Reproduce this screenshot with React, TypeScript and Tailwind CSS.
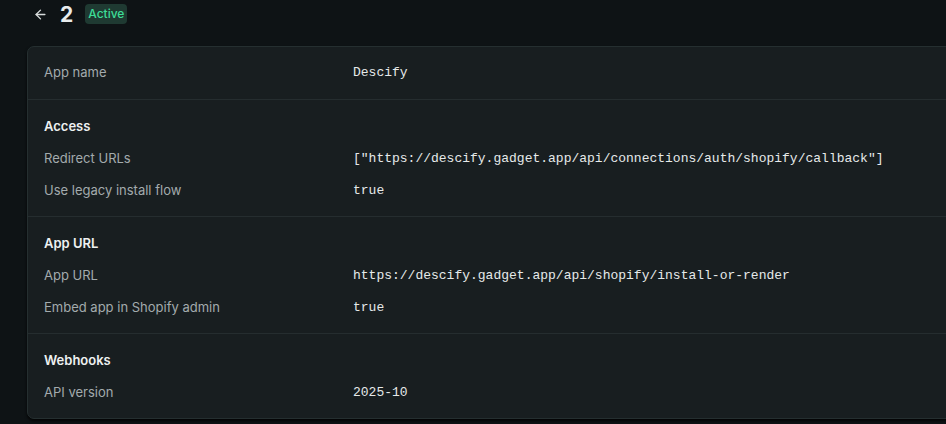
import React from "react";

const mono = { fontFamily: '"Liberation Mono", "DejaVu Sans Mono", monospace' };

function Row({ label, value }: { label: string; value: string }) {
  return (
    <div className="flex h-[32px] items-center">
      <div className="w-[309px] shrink-0 text-[13px] text-[#a3abad]">{label}</div>
      <div className="text-[13px] text-[#e6eaea] whitespace-nowrap font-['Liberation_Mono',monospace]">{value}</div>
    </div>
  );
}

function Section({ title, rows, last }: { title: string; rows: [string, string][]; last?: boolean }) {
  return (
    <div className={`px-[16px] pt-[14px] pb-[9px] ${last ? "" : "border-b border-[#252d2f]"}`}>
      <div className="h-[26px] flex items-center text-[13px] font-semibold text-[#eef1f1]">{title}</div>
      <div className="mt-[3px]">
        {rows.map(([l, v]) => (
          <Row key={l} label={l} value={v} />
        ))}
      </div>
    </div>
  );
}

export default function App() {
  return (
    <div className="w-[946px] h-[424px] overflow-hidden bg-[#0e1315] font-['Inter',sans-serif]">
      <div className="flex items-center h-[28px] pl-[33px]">
        <svg width="15" height="15" viewBox="0 0 24 24" fill="none" stroke="#d7dcdc" strokeWidth="2.2" strokeLinecap="round" strokeLinejoin="round">
          <path d="M19 12H5" />
          <path d="M12 19l-7-7 7-7" />
        </svg>
        <span className="ml-[12px] text-[21px] font-bold text-[#e8ecec] leading-none">2</span>
        <span className="ml-[12px] rounded-[4px] bg-[#1f3a32] px-[3px] h-[20px] flex items-center text-[12px] font-medium text-[#3ddc97]">Active</span>
      </div>
      <div className="ml-[27px] mt-[18px] w-[940px] rounded-[7px] border border-[#252f30] bg-[#181e20] shadow-[0_2px_3px_rgba(0,0,0,0.8)]">
        <div className="flex h-[53px] items-center px-[16px] border-b border-[#252d2f]">
          <div className="w-[309px] shrink-0 text-[13px] text-[#a3abad]">App name</div>
          <div className="text-[13px] text-[#e6eaea]" style={mono}>Descify</div>
        </div>
        <Section
          title="Access"
          rows={[
            ["Redirect URLs", '["https://descify.gadget.app/api/connections/auth/shopify/callback"]'],
            ["Use legacy install flow", "true"],
          ]}
        />
        <Section
          title="App URL"
          rows={[
            ["App URL", "https://descify.gadget.app/api/shopify/install-or-render"],
            ["Embed app in Shopify admin", "true"],
          ]}
        />
        <Section title="Webhooks" rows={[["API version", "2025-10"]]} last />
      </div>
    </div>
  );
}
